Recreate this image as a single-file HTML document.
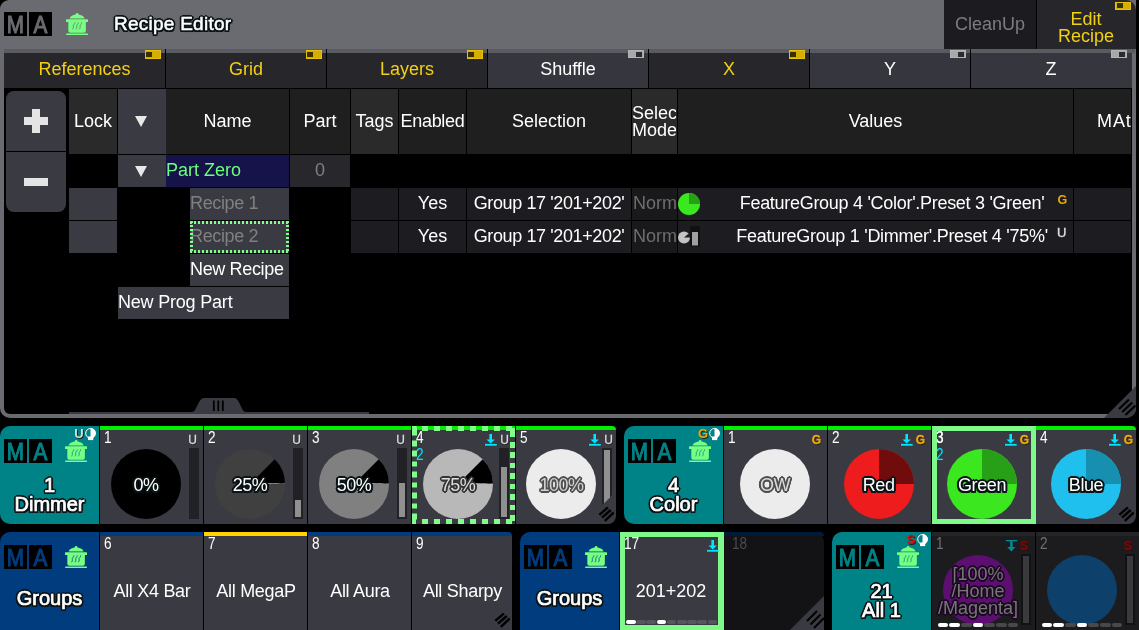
<!DOCTYPE html>
<html>
<head>
<meta charset="utf-8">
<title>Recipe Editor</title>
<style>
html,body{margin:0;padding:0;background:#000;}
body{will-change:transform;width:1139px;height:630px;position:relative;overflow:hidden;font-family:"Liberation Sans",sans-serif;color:#fff;font-size:18px;}
.a{position:absolute;box-sizing:border-box;}
.t{position:absolute;white-space:nowrap;text-align:center;line-height:20px;}
.y{color:#f2d014;}
.hd{background:#1f1f1f;}
.hl{background:#2a2a2a;}
.ol{text-shadow:-1.5px 0px 0.5px #0b1416,1.5px 0px 0.5px #0b1416,0px -1.5px 0.5px #0b1416,0px 1.5px 0.5px #0b1416,-1.1px -1.1px 0.5px #0b1416,1.1px -1.1px 0.5px #0b1416,-1.1px 1.1px 0.5px #0b1416,1.1px 1.1px 0.5px #0b1416,-2px 0px 0.5px #0b1416,2px 0px 0.5px #0b1416,0px 2px 0.5px #0b1416,0px -2px 0.5px #0b1416,1.5px 1.5px 0.5px #0b1416,-1.5px 1.5px 0.5px #0b1416,1.5px -1.5px 0.5px #0b1416,-1.5px -1.5px 0.5px #0b1416,0 0 3px #000;}
.lg{font-size:23px;-webkit-text-stroke:1px currentColor;transform:scaleX(.9);margin-top:0.5px;}
.tt{font-size:20px;-webkit-text-stroke:0.7px #fff;}
.nm{font-size:16px;line-height:16px;transform:scaleX(.85);transform-origin:0 0;}
.fl{font-size:12px;line-height:13px;-webkit-text-stroke:0.3px currentColor;text-shadow:0.7px 0.7px 0 #1a1a1a;}
.fl2{font-size:13px;line-height:13px;font-weight:bold;text-shadow:1px 1px 0 #222;}
.ol2{text-shadow:-1.5px 0px 0.5px #505050,1.5px 0px 0.5px #505050,0px -1.5px 0.5px #505050,0px 1.5px 0.5px #505050,-1.1px -1.1px 0.5px #505050,1.1px -1.1px 0.5px #505050,-1.1px 1.1px 0.5px #505050,1.1px 1.1px 0.5px #505050,-1.8px 0px 0.5px #505050,1.8px 0px 0.5px #505050,0px 1.8px 0.5px #505050,0px -1.8px 0.5px #505050,1.3px 1.3px 0.5px #505050,-1.3px 1.3px 0.5px #505050,1.3px -1.3px 0.5px #505050,-1.3px -1.3px 0.5px #505050;}
.ol3{text-shadow:-1.5px 0px 0.5px #1c0a22,1.5px 0px 0.5px #1c0a22,0px -1.5px 0.5px #1c0a22,0px 1.5px 0.5px #1c0a22,-1.1px -1.1px 0.5px #1c0a22,1.1px -1.1px 0.5px #1c0a22,-1.1px 1.1px 0.5px #1c0a22,1.1px 1.1px 0.5px #1c0a22,-1.8px 0px 0.5px #1c0a22,1.8px 0px 0.5px #1c0a22,0px 1.8px 0.5px #1c0a22,0px -1.8px 0.5px #1c0a22,1.3px 1.3px 0.5px #1c0a22,-1.3px 1.3px 0.5px #1c0a22,1.3px -1.3px 0.5px #1c0a22,-1.3px -1.3px 0.5px #1c0a22;}
.ol4{text-shadow:-1.5px 0px 0.5px #353535,1.5px 0px 0.5px #353535,0px -1.5px 0.5px #353535,0px 1.5px 0.5px #353535,-1.1px -1.1px 0.5px #353535,1.1px -1.1px 0.5px #353535,-1.1px 1.1px 0.5px #353535,1.1px 1.1px 0.5px #353535,-1.8px 0px 0.5px #353535,1.8px 0px 0.5px #353535,0px 1.8px 0.5px #353535,0px -1.8px 0.5px #353535,1.3px 1.3px 0.5px #353535,-1.3px 1.3px 0.5px #353535,1.3px -1.3px 0.5px #353535,-1.3px -1.3px 0.5px #353535;}
</style>
</head>
<body>
<!-- ===== Recipe Editor window ===== -->
<div class="a" id="win" style="left:0;top:0;width:1136px;height:418px;background:#6a6b70;border-radius:9px 0 10px 10px;"></div>
<div class="a" id="winbody" style="left:4px;top:53px;width:1128px;height:361px;background:#000;border-radius:0 0 0 6px;"></div>

<!-- title bar -->
<div class="a" style="left:4px;top:12px;width:23px;height:24px;background:#000;"></div>
<div class="a" style="left:29px;top:12px;width:23px;height:24px;background:#000;"></div>
<div class="t lg" style="left:4px;top:14px;width:23px;color:#6a6b70;">M</div>
<div class="t lg" style="left:29px;top:14px;width:23px;color:#6a6b70;">A</div>
<svg class="a" style="left:65.5px;top:13px;" width="22.400" height="22.700" viewBox="0 0 23 23" preserveAspectRatio="none"><use href="#pot" fill="#76ff82"/><use href="#steam" stroke="#6a6b70"/></svg>
<div class="t ol" style="left:114px;top:14px;font-size:19px;text-align:left;letter-spacing:0.25px;-webkit-text-stroke:0.5px #fff;">Recipe Editor</div>

<div class="a" style="left:944px;top:0;width:92px;height:49px;background:#1c1c20;"></div>
<div class="t" style="left:944px;top:14px;width:92px;color:#7c7c80;">CleanUp</div>
<div class="a" style="left:1036px;top:0;width:1px;height:49px;background:#000;"></div><div class="a" style="left:1037px;top:0;width:99px;height:49px;background:#26262b;border-radius:0 10px 0 0;"></div><div class="a" style="left:1115px;top:2px;width:16px;height:8px;background:#d4ae00;border:1px solid #e6c010;"></div><div class="a" style="left:1117px;top:3px;width:6px;height:5px;background:#3a3000;"></div>
<div class="t y" style="left:1037px;top:11px;width:98px;line-height:17px;">Edit<br>Recipe</div>

<!-- tabs -->
<div class="a" style="left:4px;top:49px;width:1131px;height:4px;background:#5a5b60;"></div>
<div class="a" style="left:4px;top:53px;width:161px;height:35px;background:#26262b;"></div>
<div class="t y" style="left:4px;top:59px;width:161px;">References</div>
<div class="a" style="left:145px;top:50.400px;width:16px;height:8.300px;background:#d4ae00;border:1px solid #e6c010;"></div><div class="a" style="left:146px;top:52px;width:6px;height:5px;background:#3a3000;"></div>
<div class="a" style="left:166px;top:53px;width:160px;height:35px;background:#26262b;"></div>
<div class="t y" style="left:166px;top:59px;width:160px;">Grid</div>
<div class="a" style="left:306px;top:50.400px;width:16px;height:8.300px;background:#d4ae00;border:1px solid #e6c010;"></div><div class="a" style="left:307px;top:52px;width:6px;height:5px;background:#3a3000;"></div>
<div class="a" style="left:327px;top:53px;width:160px;height:35px;background:#26262b;"></div>
<div class="t y" style="left:327px;top:59px;width:160px;">Layers</div>
<div class="a" style="left:467px;top:50.400px;width:16px;height:8.300px;background:#d4ae00;border:1px solid #e6c010;"></div><div class="a" style="left:468px;top:52px;width:6px;height:5px;background:#3a3000;"></div>
<div class="a" style="left:488px;top:53px;width:160px;height:35px;background:#36363e;"></div>
<div class="t " style="left:488px;top:59px;width:160px;">Shuffle</div>
<div class="a" style="left:628px;top:50.400px;width:16px;height:8px;background:#a8a8a8;border:1px solid #b4b4b4;"></div><div class="a" style="left:636px;top:52px;width:6px;height:5px;background:#2a2a30;"></div>
<div class="a" style="left:649px;top:53px;width:160px;height:35px;background:#26262b;"></div>
<div class="t y" style="left:649px;top:59px;width:160px;">X</div>
<div class="a" style="left:789px;top:50.400px;width:16px;height:8.300px;background:#d4ae00;border:1px solid #e6c010;"></div><div class="a" style="left:790px;top:52px;width:6px;height:5px;background:#3a3000;"></div>
<div class="a" style="left:810px;top:53px;width:160px;height:35px;background:#36363e;"></div>
<div class="t " style="left:810px;top:59px;width:160px;">Y</div>
<div class="a" style="left:950px;top:50.400px;width:16px;height:8px;background:#a8a8a8;border:1px solid #b4b4b4;"></div><div class="a" style="left:958px;top:52px;width:6px;height:5px;background:#2a2a30;"></div>
<div class="a" style="left:971px;top:53px;width:161px;height:35px;background:#36363e;"></div>
<div class="t " style="left:971px;top:59px;width:160px;">Z</div>
<div class="a" style="left:1111px;top:50.400px;width:16px;height:8px;background:#a8a8a8;border:1px solid #b4b4b4;"></div><div class="a" style="left:1119px;top:52px;width:6px;height:5px;background:#2a2a30;"></div>

<div class="a" style="left:165px;top:49px;width:1px;height:39px;background:#000;"></div>
<div class="a" style="left:326px;top:49px;width:1px;height:39px;background:#000;"></div>
<div class="a" style="left:487px;top:49px;width:1px;height:39px;background:#000;"></div>
<div class="a" style="left:648px;top:49px;width:1px;height:39px;background:#000;"></div>
<div class="a" style="left:809px;top:49px;width:1px;height:39px;background:#000;"></div>
<div class="a" style="left:970px;top:49px;width:1px;height:39px;background:#000;"></div>
<div class="a" style="left:6px;top:91px;width:60px;height:60px;background:#3a3a42;border-radius:8px 8px 0 0;"></div>
<div class="a" style="left:6px;top:152px;width:60px;height:60px;background:#3a3a42;border-radius:0 0 8px 8px;"></div>
<div class="a" style="left:24px;top:117px;width:24px;height:8px;background:#e4e4e4;"></div><div class="a" style="left:32px;top:109px;width:8px;height:24px;background:#e4e4e4;"></div>
<div class="a" style="left:24px;top:178px;width:24px;height:8px;background:#e4e4e4;"></div>
<div class="a" style="left:69px;top:89px;width:48px;height:65px;background:#2a2a2a;"></div>
<div class="t" style="left:69px;top:111px;width:48px;">Lock</div>
<div class="a" style="left:118px;top:89px;width:48px;height:65px;background:#3a3a42;"></div>
<div class="a" style="left:166px;top:89px;width:123px;height:65px;background:#1f1f1f;"></div>
<div class="t" style="left:166px;top:111px;width:123px;">Name</div>
<div class="a" style="left:290px;top:89px;width:60px;height:65px;background:#1f1f1f;"></div>
<div class="t" style="left:290px;top:111px;width:60px;">Part</div>
<div class="a" style="left:351px;top:89px;width:47px;height:65px;background:#2a2a2a;"></div>
<div class="t" style="left:351px;top:111px;width:47px;">Tags</div>
<div class="a" style="left:399px;top:89px;width:67px;height:65px;background:#1f1f1f;"></div>
<div class="t" style="left:399px;top:111px;width:67px;letter-spacing:-0.3px;">Enabled</div>
<div class="a" style="left:467px;top:89px;width:164px;height:65px;background:#1f1f1f;"></div>
<div class="t" style="left:467px;top:111px;width:164px;">Selection</div>
<div class="a" style="left:632px;top:89px;width:45px;height:65px;background:#2a2a2a;"></div>
<div class="a" style="left:678px;top:89px;width:395px;height:65px;background:#1f1f1f;"></div>
<div class="t" style="left:678px;top:111px;width:395px;">Values</div>
<div class="a" style="left:1074px;top:89px;width:57px;height:65px;background:#1f1f1f;"></div>
<div class="t" style="left:632px;top:105px;line-height:17px;text-align:left;width:44px;overflow:hidden;">Select<br>Mode</div>
<div class="t" style="left:1097px;top:111px;text-align:left;width:35px;overflow:hidden;letter-spacing:0.9px;">MAtricks</div>
<div class="a" style="left:135px;top:116px;width:0;height:0;border-left:6px solid transparent;border-right:6px solid transparent;border-top:11px solid #e8e8e8;"></div>
<div class="a" style="left:118px;top:155px;width:48px;height:32px;background:#3a3a42;"></div>
<div class="a" style="left:135px;top:166px;width:0;height:0;border-left:6px solid transparent;border-right:6px solid transparent;border-top:11px solid #e8e8e8;"></div>
<div class="a" style="left:166px;top:155px;width:123px;height:32px;background:#15134a;"></div>
<div class="t" style="left:166px;top:160px;width:123px;color:#6bff7b;text-align:left;">Part Zero</div>
<div class="a" style="left:290px;top:155px;width:60px;height:32px;background:#28282c;"></div>
<div class="t" style="left:290px;top:160px;width:60px;color:#808080;text-align:center;">0</div>
<div class="a" style="left:69px;top:188px;width:48px;height:32px;background:#3a3a42;"></div>
<div class="a" style="left:190px;top:188px;width:99px;height:32px;background:#3a3a42;"></div>
<div class="t" style="left:190px;top:193px;width:98px;color:#808080;text-align:left;letter-spacing:-0.35px;">Recipe 1</div>
<div class="a" style="left:351px;top:188px;width:47px;height:32px;background:#1d1d21;"></div>
<div class="a" style="left:399px;top:188px;width:67px;height:32px;background:#1d1d21;"></div>
<div class="t" style="left:399px;top:193px;width:67px;color:#fff;text-align:center;">Yes</div>
<div class="a" style="left:467px;top:188px;width:164px;height:32px;background:#1d1d21;"></div>
<div class="t" style="left:467px;top:193px;width:164px;color:#fff;text-align:center;letter-spacing:-0.38px;">Group 17 '201+202'</div>
<div class="a" style="left:632px;top:188px;width:45px;height:32px;background:#19191c;"></div>
<div class="t" style="left:633px;top:193px;width:44px;color:#6e6e6e;text-align:left;overflow:hidden;">Normal</div>
<div class="a" style="left:678px;top:188px;width:395px;height:32px;background:#1d1d21;"></div>
<div class="t" style="left:702px;top:193px;width:380px;color:#fff;text-align:center;letter-spacing:-0.29px;">FeatureGroup 4 'Color'.Preset 3 'Green'</div>
<div class="a" style="left:1074px;top:188px;width:57px;height:32px;background:#1d1d21;"></div>
<div class="a" style="left:69px;top:221px;width:48px;height:32px;background:#3a3a42;"></div>
<div class="a" style="left:190px;top:221px;width:99px;height:32px;background:#3a3a42;"></div>
<div class="t" style="left:190px;top:226px;width:98px;color:#808080;text-align:left;letter-spacing:-0.35px;">Recipe 2</div>
<div class="a" style="left:351px;top:221px;width:47px;height:32px;background:#1d1d21;"></div>
<div class="a" style="left:399px;top:221px;width:67px;height:32px;background:#1d1d21;"></div>
<div class="t" style="left:399px;top:226px;width:67px;color:#fff;text-align:center;">Yes</div>
<div class="a" style="left:467px;top:221px;width:164px;height:32px;background:#1d1d21;"></div>
<div class="t" style="left:467px;top:226px;width:164px;color:#fff;text-align:center;letter-spacing:-0.38px;">Group 17 '201+202'</div>
<div class="a" style="left:632px;top:221px;width:45px;height:32px;background:#19191c;"></div>
<div class="t" style="left:633px;top:226px;width:44px;color:#6e6e6e;text-align:left;overflow:hidden;">Normal</div>
<div class="a" style="left:678px;top:221px;width:395px;height:32px;background:#1d1d21;"></div>
<div class="t" style="left:702px;top:226px;width:380px;color:#fff;text-align:center;letter-spacing:-0.27px;">FeatureGroup 1 'Dimmer'.Preset 4 '75%'</div>
<div class="a" style="left:1074px;top:221px;width:57px;height:32px;background:#1d1d21;"></div>
<div class="t" style="left:1057.500px;top:193.500px;font-size:12.5px;font-weight:bold;color:#f0a800;line-height:12px;">G</div>
<div class="t" style="left:1057px;top:226.500px;font-size:13px;color:#ddd;line-height:12px;-webkit-text-stroke:0.4px #ddd;">U</div>
<div class="a" style="left:190px;top:221px;width:99px;height:3px;background:repeating-linear-gradient(90deg,#80ff8a 0 2px,transparent 2px 4px);"></div><div class="a" style="left:190px;top:250px;width:99px;height:3px;background:repeating-linear-gradient(90deg,#80ff8a 0 2px,transparent 2px 4px);"></div><div class="a" style="left:190px;top:221px;width:3px;height:32px;background:repeating-linear-gradient(180deg,#80ff8a 0 2px,transparent 2px 4px);"></div><div class="a" style="left:286px;top:221px;width:3px;height:32px;background:repeating-linear-gradient(180deg,#80ff8a 0 2px,transparent 2px 4px);"></div>
<svg class="a" style="left:678px;top:193px;" width="22" height="22" viewBox="0 0 22 22"><circle cx="11" cy="11" r="11" fill="#3be81f"/><path d="M11 11V0A11 11 0 0 1 22 11z" fill="#27a017"/></svg>
<svg class="a" style="left:678px;top:226px;" width="22" height="21" viewBox="0 0 22 21"><circle cx="6" cy="11.500" r="6" fill="#c4c4c4"/><path d="M6 11.500L13 5.500V11.500z" fill="#1d1d21"/><rect x="12" y="0" width="10" height="20.500" fill="#111"/><rect x="14" y="6" width="6" height="13.500" fill="#a0a0a0"/></svg>
<div class="a" style="left:190px;top:254px;width:99px;height:32px;background:#3a3a42;"></div>
<div class="t" style="left:190px;top:259px;width:98px;color:#fff;text-align:left;letter-spacing:-0.35px;">New Recipe</div>
<div class="a" style="left:118px;top:287px;width:171px;height:32px;background:#3a3a42;"></div>
<div class="t" style="left:118px;top:292px;width:171px;color:#fff;text-align:left;letter-spacing:-0.2px;">New Prog Part</div>
<div class="a" style="left:69px;top:412px;width:300px;height:2px;background:#3a3a42;"></div>
<svg class="a" style="left:192px;top:398px;" width="54" height="14" viewBox="0 0 54 14"><path d="M0 14C5 14 6 0 12 0H42C48 0 49 14 54 14z" fill="#3a3a42"/><path d="M21.800 2.500V13M26.300 2.500V13M30.800 2.500V13" stroke="#000" stroke-width="1.800"/></svg>
<svg class="a" style="left:1104px;top:386px;" width="32" height="32" viewBox="0 0 32 32"><path d="M32 0V22A10 10 0 0 1 22 32H0z" fill="#3a3a42"/><path d="M15 23L25 13.500M18.200 26L28.200 16.500M21.400 29L31.400 19.500" stroke="#000" stroke-width="2.200"/></svg>
<!-- pools -->
<div class="a" style="left:0px;top:426px;width:99px;height:98px;background:#008387;border-radius:10px 0 0 10px;"></div>
<div class="a" style="left:4px;top:439px;width:23px;height:24px;background:#000;"></div>
<div class="a" style="left:29px;top:439px;width:23px;height:24px;background:#000;"></div>
<div class="t lg" style="left:4px;top:441px;width:23px;color:#008387;">M</div><div class="t lg" style="left:29px;top:441px;width:23px;color:#008387;">A</div>
<svg class="a" style="left:64.5px;top:439.5px;" width="22.400" height="22.700" viewBox="0 0 23 23" preserveAspectRatio="none"><use href="#pot" fill="#76ff82"/><use href="#steam" stroke="#008387"/></svg>
<div class="t fl2" style="left:73px;top:427px;width:12px;color:#e0d8d8;">U</div>
<svg class="a" style="left:85px;top:428px;" width="12" height="13" viewBox="0 0 12 13"><use href="#bulb"/></svg>
<div class="t tt ol" style="left:0px;top:475px;width:99px;">1</div>
<div class="t tt ol" style="left:0px;top:494px;width:99px;">Dimmer</div>
<div class="a" style="left:100px;top:426px;width:516px;height:4px;background:#00f000;border-radius:0 8px 0 0;"></div>
<div class="a" style="left:100px;top:430px;width:103px;height:94px;background:#3a3a42;"></div>
<div class="t nm" style="left:103.5px;top:430px;text-align:left;color:#fff;">1</div>
<div class="t fl" style="left:186.5px;top:434px;width:12px;color:#ddd;">U</div>
<svg class="a" style="left:109.5px;top:447.5px;" width="72" height="72" viewBox="-36 -36 72 72"><circle r="35" fill="#000"/></svg>
<div class="a" style="left:189px;top:448px;width:10px;height:71px;background:#222226;"></div>
<div class="t ol" style="left:96px;top:475px;width:100px;color:#fff;letter-spacing:-0.5px;">0%</div>
<div class="a" style="left:204px;top:430px;width:103px;height:94px;background:#3a3a42;"></div>
<div class="t nm" style="left:207.5px;top:430px;text-align:left;color:#fff;">2</div>
<div class="t fl" style="left:290.5px;top:434px;width:12px;color:#ddd;">U</div>
<svg class="a" style="left:213.5px;top:447.5px;" width="72" height="72" viewBox="-36 -36 72 72"><circle r="35" fill="#404040"/><path d="M0 0L35.00 -0.00A35 35 0 0 0 24.75 -24.75z" fill="#000"/></svg>
<div class="a" style="left:263.5px;top:483px;width:21px;height:1px;background:linear-gradient(90deg,#c33,#cc3,#3c3,#3cc,#33c,#c3c);opacity:.85;"></div>
<div class="a" style="left:293px;top:448px;width:10px;height:71px;background:#222226;"></div>
<div class="a" style="left:295px;top:500px;width:6px;height:17px;background:#909090;"></div>
<div class="t ol" style="left:200px;top:475px;width:100px;color:#fff;letter-spacing:-0.5px;">25%</div>
<div class="a" style="left:308px;top:430px;width:103px;height:94px;background:#3a3a42;"></div>
<div class="t nm" style="left:311.5px;top:430px;text-align:left;color:#fff;">3</div>
<div class="t fl" style="left:394.5px;top:434px;width:12px;color:#ddd;">U</div>
<svg class="a" style="left:317.5px;top:447.5px;" width="72" height="72" viewBox="-36 -36 72 72"><circle r="35" fill="#808080"/><path d="M0 0L35.00 -0.00A35 35 0 0 0 24.75 -24.75z" fill="#000"/></svg>
<div class="a" style="left:367.5px;top:483px;width:21px;height:1px;background:linear-gradient(90deg,#c33,#cc3,#3c3,#3cc,#33c,#c3c);opacity:.85;"></div>
<div class="a" style="left:397px;top:448px;width:10px;height:71px;background:#222226;"></div>
<div class="a" style="left:399px;top:483px;width:6px;height:34px;background:#909090;"></div>
<div class="t ol" style="left:304px;top:475px;width:100px;color:#fff;letter-spacing:-0.5px;">50%</div>
<div class="a" style="left:412px;top:430px;width:103px;height:94px;background:#3a3a42;"></div>
<div class="t nm" style="left:415.5px;top:430px;text-align:left;color:#fff;">4</div>
<div class="t fl" style="left:498.5px;top:434px;width:12px;color:#ddd;">U</div>
<svg class="a" style="left:485.4px;top:433.9px;" width="12" height="12" viewBox="0 0 12 12"><use href="#dl" fill="#00e5ff"/></svg>
<svg class="a" style="left:421.5px;top:447.5px;" width="72" height="72" viewBox="-36 -36 72 72"><circle r="35" fill="#b8b8b8"/><path d="M0 0L35.00 -0.00A35 35 0 0 0 24.75 -24.75z" fill="#000"/></svg>
<div class="a" style="left:471.5px;top:483px;width:21px;height:1px;background:linear-gradient(90deg,#c33,#cc3,#3c3,#3cc,#33c,#c3c);opacity:.85;"></div>
<div class="a" style="left:499px;top:448px;width:10px;height:71px;background:#222226;"></div>
<div class="a" style="left:501px;top:467px;width:6px;height:50px;background:#909090;"></div>
<div class="t ol4" style="left:408px;top:475px;width:100px;color:#dedede;letter-spacing:-0.5px;">75%</div>
<div class="a" style="left:516px;top:430px;width:100px;height:94px;background:#3a3a42;border-radius:0 0 8px 0;"></div>
<div class="t nm" style="left:519.5px;top:430px;text-align:left;color:#fff;">5</div>
<div class="t fl" style="left:602.5px;top:434px;width:12px;color:#ddd;">U</div>
<svg class="a" style="left:589.4px;top:433.9px;" width="12" height="12" viewBox="0 0 12 12"><use href="#dl" fill="#00e5ff"/></svg>
<svg class="a" style="left:525px;top:447.5px;" width="72" height="72" viewBox="-36 -36 72 72"><circle r="35" fill="#ececec"/></svg>
<div class="a" style="left:602px;top:448px;width:10px;height:57px;background:#222226;clip-path:polygon(0 0,100% 0,100% 47px,0 57px);"></div>
<div class="a" style="left:604px;top:450px;width:6px;height:53.5px;background:#909090;clip-path:polygon(0 0,100% 0,100% 47.5px,0 53.5px);"></div>
<div class="t ol2" style="left:511.5px;top:475px;width:100px;color:#d2d2d2;letter-spacing:-0.5px;">100%</div>
<div class="a" style="left:203px;top:426px;width:1px;height:98px;background:#000;"></div>
<div class="a" style="left:307px;top:426px;width:1px;height:98px;background:#000;"></div>
<div class="a" style="left:411px;top:426px;width:1px;height:98px;background:#000;"></div>
<div class="a" style="left:515px;top:426px;width:1px;height:98px;background:#000;"></div>
<div class="a" style="left:827px;top:426px;width:1px;height:98px;background:#000;"></div>
<div class="a" style="left:931px;top:426px;width:1px;height:98px;background:#000;"></div>
<div class="a" style="left:1035px;top:426px;width:1px;height:98px;background:#000;"></div>
<div class="t nm" style="left:415.5px;top:447px;text-align:left;color:#00e5ff;">2</div>
<div class="a" style="left:412px;top:426px;width:104px;height:5px;background:repeating-linear-gradient(90deg,#80ff8a 0 4px,transparent 4px 10px,#80ff8a 10px 12px);"></div><div class="a" style="left:412px;top:519px;width:104px;height:5px;background:repeating-linear-gradient(90deg,#80ff8a 0 4px,transparent 4px 10px,#80ff8a 10px 12px);"></div><div class="a" style="left:412px;top:426px;width:5px;height:98px;background:repeating-linear-gradient(180deg,#80ff8a 0 5px,transparent 5px 10px,#80ff8a 10px 10.5px) 0 4.5px;"></div><div class="a" style="left:510px;top:426px;width:5px;height:98px;background:repeating-linear-gradient(180deg,#80ff8a 0 5px,transparent 5px 10px,#80ff8a 10px 10.5px) 0 6px;"></div>
<svg class="a" style="left:598px;top:507px;" width="16" height="16" viewBox="0 0 16 16"><use href="#grip"/></svg>
<div class="a" style="left:624px;top:426px;width:99px;height:98px;background:#008387;border-radius:10px 0 0 10px;"></div>
<div class="a" style="left:628px;top:439px;width:23px;height:24px;background:#000;"></div>
<div class="a" style="left:653px;top:439px;width:23px;height:24px;background:#000;"></div>
<div class="t lg" style="left:628px;top:441px;width:23px;color:#008387;">M</div><div class="t lg" style="left:653px;top:441px;width:23px;color:#008387;">A</div>
<svg class="a" style="left:688.5px;top:439.5px;" width="22.400" height="22.700" viewBox="0 0 23 23" preserveAspectRatio="none"><use href="#pot" fill="#76ff82"/><use href="#steam" stroke="#008387"/></svg>
<div class="t fl2" style="left:697px;top:427px;width:12px;color:#f2aa00;">G</div>
<svg class="a" style="left:709px;top:428px;" width="12" height="13" viewBox="0 0 12 13"><use href="#bulb"/></svg>
<div class="t tt ol" style="left:624px;top:475px;width:99px;">4</div>
<div class="t tt ol" style="left:624px;top:494px;width:99px;">Color</div>
<div class="a" style="left:724px;top:426px;width:412px;height:4px;background:#00f000;border-radius:0 8px 0 0;"></div>
<div class="a" style="left:724px;top:430px;width:103px;height:94px;background:#3a3a42;"></div>
<div class="t nm" style="left:727.5px;top:430px;text-align:left;color:#fff;">1</div>
<div class="t fl" style="left:810.5px;top:434px;width:12px;color:#f2aa00;font-weight:bold;">G</div>
<svg class="a" style="left:739px;top:447.5px;" width="72" height="72" viewBox="-36 -36 72 72"><circle r="35" fill="#ececec"/></svg>
<div class="t ol2" style="left:725px;top:475px;width:100px;color:#d8d8d8;letter-spacing:-0.4px;">OW</div>
<div class="a" style="left:828px;top:430px;width:103px;height:94px;background:#3a3a42;"></div>
<div class="t nm" style="left:831.5px;top:430px;text-align:left;color:#fff;">2</div>
<div class="t fl" style="left:914.5px;top:434px;width:12px;color:#f2aa00;font-weight:bold;">G</div>
<svg class="a" style="left:901.4px;top:433.9px;" width="12" height="12" viewBox="0 0 12 12"><use href="#dl" fill="#00e5ff"/></svg>
<svg class="a" style="left:842.7px;top:447.5px;" width="72" height="72" viewBox="-36 -36 72 72"><circle r="35" fill="#ee1c1c"/><path d="M0 0L35.00 -0.00A35 35 0 0 0 0.00 -35.00z" fill="#700c0c"/></svg>
<div class="t ol" style="left:828.7px;top:475px;width:100px;color:#fff;letter-spacing:-0.4px;">Red</div>
<div class="a" style="left:932px;top:430px;width:103px;height:94px;background:#3a3a42;"></div>
<div class="t nm" style="left:935.5px;top:430px;text-align:left;color:#fff;">3</div>
<div class="t fl" style="left:1018.5px;top:434px;width:12px;color:#f2aa00;font-weight:bold;">G</div>
<svg class="a" style="left:1005.4px;top:433.9px;" width="12" height="12" viewBox="0 0 12 12"><use href="#dl" fill="#00e5ff"/></svg>
<svg class="a" style="left:946px;top:447.5px;" width="72" height="72" viewBox="-36 -36 72 72"><circle r="35" fill="#3be81f"/><path d="M0 0L35.00 -0.00A35 35 0 0 0 0.00 -35.00z" fill="#27a017"/></svg>
<div class="t ol" style="left:932px;top:475px;width:100px;color:#fff;letter-spacing:-0.4px;">Green</div>
<div class="a" style="left:1036px;top:430px;width:100px;height:94px;background:#3a3a42;border-radius:0 0 8px 0;"></div>
<div class="t nm" style="left:1039.5px;top:430px;text-align:left;color:#fff;">4</div>
<div class="t fl" style="left:1122.5px;top:434px;width:12px;color:#f2aa00;font-weight:bold;">G</div>
<svg class="a" style="left:1109.4px;top:433.9px;" width="12" height="12" viewBox="0 0 12 12"><use href="#dl" fill="#00e5ff"/></svg>
<svg class="a" style="left:1050px;top:447.5px;" width="72" height="72" viewBox="-36 -36 72 72"><circle r="35" fill="#1fc0ee"/><path d="M0 0L35.00 -0.00A35 35 0 0 0 0.00 -35.00z" fill="#168fb0"/></svg>
<div class="t ol" style="left:1036px;top:475px;width:100px;color:#fff;letter-spacing:-0.4px;">Blue</div>
<div class="a" style="left:827px;top:426px;width:1px;height:98px;background:#000;"></div>
<div class="a" style="left:931px;top:426px;width:1px;height:98px;background:#000;"></div>
<div class="a" style="left:1035px;top:426px;width:1px;height:98px;background:#000;"></div>
<div class="a" style="left:932px;top:426px;width:104px;height:98px;border:5px solid #80f98b;"></div>
<div class="t nm" style="left:935.5px;top:430px;text-align:left;color:#fff;">3</div>
<div class="t nm" style="left:935.5px;top:447px;text-align:left;color:#00e5ff;">2</div>
<svg class="a" style="left:1118px;top:507px;" width="16" height="16" viewBox="0 0 16 16"><use href="#grip"/></svg>
<div class="a" style="left:0px;top:532px;width:99px;height:98px;background:#003c7e;border-radius:10px 0 0 0;"></div>
<div class="a" style="left:4px;top:545px;width:23px;height:24px;background:#000;"></div>
<div class="a" style="left:29px;top:545px;width:23px;height:24px;background:#000;"></div>
<div class="t lg" style="left:4px;top:547px;width:23px;color:#003c7e;">M</div><div class="t lg" style="left:29px;top:547px;width:23px;color:#003c7e;">A</div>
<svg class="a" style="left:64.5px;top:545.5px;" width="22.400" height="22.700" viewBox="0 0 23 23" preserveAspectRatio="none"><use href="#pot" fill="#76ff82"/><use href="#steam" stroke="#003c7e"/></svg>
<div class="t tt ol" style="left:0px;top:588px;width:99px;">Groups</div>
<div class="a" style="left:100px;top:532px;width:103px;height:4px;background:#003c7e;"></div>
<div class="a" style="left:100px;top:536px;width:103px;height:94px;background:#3a3a42;"></div>
<div class="t nm" style="left:103.5px;top:536px;text-align:left;color:#fff;">6</div>
<div class="t" style="left:100px;top:581px;width:104px;letter-spacing:-0.3px;">All X4 Bar</div>
<div class="a" style="left:204px;top:532px;width:103px;height:4px;background:#ffd200;"></div>
<div class="a" style="left:204px;top:536px;width:103px;height:94px;background:#3a3a42;"></div>
<div class="t nm" style="left:207.5px;top:536px;text-align:left;color:#fff;">7</div>
<div class="t" style="left:204px;top:581px;width:104px;letter-spacing:-0.3px;">All MegaP</div>
<div class="a" style="left:308px;top:532px;width:103px;height:4px;background:#003c7e;"></div>
<div class="a" style="left:308px;top:536px;width:103px;height:94px;background:#3a3a42;"></div>
<div class="t nm" style="left:311.5px;top:536px;text-align:left;color:#fff;">8</div>
<div class="t" style="left:308px;top:581px;width:104px;letter-spacing:-0.3px;">All Aura</div>
<div class="a" style="left:412px;top:532px;width:100px;height:4px;background:#003c7e;border-radius:0 8px 0 0;"></div>
<div class="a" style="left:412px;top:536px;width:100px;height:94px;background:#3a3a42;"></div>
<div class="t nm" style="left:415.5px;top:536px;text-align:left;color:#fff;">9</div>
<div class="t" style="left:412px;top:581px;width:101px;letter-spacing:-0.3px;">All Sharpy</div>
<svg class="a" style="left:494px;top:613px;" width="16" height="16" viewBox="0 0 16 16"><use href="#grip"/></svg>
<div class="a" style="left:520px;top:532px;width:99px;height:98px;background:#003c7e;border-radius:10px 0 0 0;"></div>
<div class="a" style="left:524px;top:545px;width:23px;height:24px;background:#000;"></div>
<div class="a" style="left:549px;top:545px;width:23px;height:24px;background:#000;"></div>
<div class="t lg" style="left:524px;top:547px;width:23px;color:#003c7e;">M</div><div class="t lg" style="left:549px;top:547px;width:23px;color:#003c7e;">A</div>
<svg class="a" style="left:584.5px;top:545.5px;" width="22.400" height="22.700" viewBox="0 0 23 23" preserveAspectRatio="none"><use href="#pot" fill="#76ff82"/><use href="#steam" stroke="#003c7e"/></svg>
<div class="t tt ol" style="left:520px;top:588px;width:99px;">Groups</div>
<div class="a" style="left:620px;top:532px;width:104px;height:98px;background:#80f98b;"></div>
<div class="a" style="left:625px;top:537px;width:93px;height:88px;background:#3a3a42;"></div>
<div class="t nm" style="left:623.5px;top:536px;text-align:left;color:#fff;">17</div>
<svg class="a" style="left:707.4px;top:539.9px;" width="12" height="12" viewBox="0 0 12 12"><use href="#dl" fill="#00e5ff"/></svg>
<div class="t" style="left:619px;top:581px;width:104px;">201+202</div>
<div class="a" style="left:626px;top:620px;width:9.5px;height:4px;background:#fff;border-radius:2px;"></div>
<div class="a" style="left:636.2px;top:620px;width:9.5px;height:4px;background:#56565c;border-radius:2px;"></div>
<div class="a" style="left:646.4px;top:620px;width:9.5px;height:4px;background:#56565c;border-radius:2px;"></div>
<div class="a" style="left:656.6px;top:620px;width:9.5px;height:4px;background:#fff;border-radius:2px;"></div>
<div class="a" style="left:666.8px;top:620px;width:9.5px;height:4px;background:#56565c;border-radius:2px;"></div>
<div class="a" style="left:677px;top:620px;width:9.5px;height:4px;background:#56565c;border-radius:2px;"></div>
<div class="a" style="left:687.2px;top:620px;width:9.5px;height:4px;background:#56565c;border-radius:2px;"></div>
<div class="a" style="left:697.4px;top:620px;width:9.5px;height:4px;background:#56565c;border-radius:2px;"></div>
<div class="a" style="left:707.6px;top:620px;width:9.5px;height:4px;background:#56565c;border-radius:2px;"></div>
<div class="a" style="left:724px;top:532px;width:100px;height:98px;background:#131316;border-radius:0 10px 0 0;"></div>
<div class="a" style="left:724px;top:532px;width:100px;height:4px;background:#001a3a;border-radius:0 10px 0 0;"></div>
<div class="t nm" style="left:731.5px;top:536px;text-align:left;color:#4a4a4e;">18</div>
<svg class="a" style="left:790px;top:596px;" width="34" height="34" viewBox="0 0 34 34"><path d="M34 0V34H0z" fill="#3a3a42"/><path d="M17 25L27 15M20.500 28.500L30.500 18.500M24 32L34 22" stroke="#000" stroke-width="2"/></svg>
<div class="a" style="left:832px;top:532px;width:99px;height:98px;background:#008387;border-radius:10px 0 0 0;"></div>
<div class="a" style="left:836px;top:545px;width:23px;height:24px;background:#000;"></div>
<div class="a" style="left:861px;top:545px;width:23px;height:24px;background:#000;"></div>
<div class="t lg" style="left:836px;top:547px;width:23px;color:#008387;">M</div><div class="t lg" style="left:861px;top:547px;width:23px;color:#008387;">A</div>
<svg class="a" style="left:896.5px;top:545.5px;" width="22.400" height="22.700" viewBox="0 0 23 23" preserveAspectRatio="none"><use href="#pot" fill="#76ff82"/><use href="#steam" stroke="#008387"/></svg>
<div class="t fl2" style="left:905px;top:533px;width:12px;color:#f00000;">S</div>
<svg class="a" style="left:917px;top:534px;" width="12" height="13" viewBox="0 0 12 13"><use href="#bulb"/></svg>
<div class="t tt ol" style="left:832px;top:581px;width:99px;">21</div>
<div class="t tt ol" style="left:832px;top:600px;width:99px;">All 1</div>
<div class="a" style="left:932px;top:532px;width:103px;height:4px;background:#252528;"></div>
<div class="a" style="left:932px;top:536px;width:103px;height:94px;background:#1c1c1f;"></div>
<div class="t nm" style="left:935.5px;top:536px;text-align:left;color:#707070;">1</div>
<div class="t fl" style="left:1018px;top:540px;width:12px;color:#8b0000;font-weight:bold;">S</div>
<svg class="a" style="left:941.8px;top:554px;" width="72" height="72" viewBox="-36 -36 72 72"><circle r="35" fill="#5c0f70"/></svg>
<div class="a" style="left:1021px;top:554px;width:10px;height:71px;background:#121215;"></div>
<div class="a" style="left:1023px;top:556px;width:6px;height:67px;background:#3a3a3e;"></div>
<div class="a" style="left:937.5px;top:623px;width:10.8px;height:3.7px;background:#fff;border-radius:2px;"></div>
<div class="a" style="left:949.2px;top:623px;width:10.8px;height:3.7px;background:#fff;border-radius:2px;"></div>
<div class="a" style="left:960.9px;top:623px;width:10.8px;height:3.7px;background:#48484c;border-radius:2px;"></div>
<div class="a" style="left:972.6px;top:623px;width:10.8px;height:3.7px;background:#fff;border-radius:2px;"></div>
<div class="a" style="left:984.3px;top:623px;width:10.8px;height:3.7px;background:#48484c;border-radius:2px;"></div>
<div class="a" style="left:996px;top:623px;width:10.8px;height:3.7px;background:#48484c;border-radius:2px;"></div>
<div class="a" style="left:1007.7px;top:623px;width:10.8px;height:3.7px;background:#48484c;border-radius:2px;"></div>
<div class="a" style="left:1036px;top:532px;width:103px;height:4px;background:#252528;"></div>
<div class="a" style="left:1036px;top:536px;width:103px;height:94px;background:#1c1c1f;"></div>
<div class="t nm" style="left:1039.5px;top:536px;text-align:left;color:#707070;">2</div>
<div class="t fl" style="left:1122px;top:540px;width:12px;color:#8b0000;font-weight:bold;">S</div>
<svg class="a" style="left:1045.8px;top:554px;" width="72" height="72" viewBox="-36 -36 72 72"><circle r="35" fill="#0d416b"/></svg>
<div class="a" style="left:1125px;top:554px;width:10px;height:71px;background:#121215;"></div>
<div class="a" style="left:1127px;top:556px;width:6px;height:67px;background:#3a3a3e;"></div>
<div class="a" style="left:1041.5px;top:623px;width:10.8px;height:3.7px;background:#fff;border-radius:2px;"></div>
<div class="a" style="left:1053.2px;top:623px;width:10.8px;height:3.7px;background:#fff;border-radius:2px;"></div>
<div class="a" style="left:1064.9px;top:623px;width:10.8px;height:3.7px;background:#48484c;border-radius:2px;"></div>
<div class="a" style="left:1076.6px;top:623px;width:10.8px;height:3.7px;background:#fff;border-radius:2px;"></div>
<div class="a" style="left:1088.3px;top:623px;width:10.8px;height:3.7px;background:#48484c;border-radius:2px;"></div>
<div class="a" style="left:1100px;top:623px;width:10.8px;height:3.7px;background:#48484c;border-radius:2px;"></div>
<div class="a" style="left:1111.7px;top:623px;width:10.8px;height:3.7px;background:#48484c;border-radius:2px;"></div>
<svg class="a" style="left:1005.6px;top:539.8px;" width="12" height="12" viewBox="0 0 12 12"><use href="#dl2" fill="#008c94"/></svg>
<div class="t ol3" style="left:926px;top:566px;width:104px;color:#777;line-height:17px;">[100%<br>/Home<br>/Magenta]</div>
<svg width="0" height="0" style="position:absolute">
<defs>
<g id="pot">
<circle cx="11.400" cy="1.400" r="1.400"/>
<path d="M3.800 5.500C4.300 3.300 7.500 1.600 11.400 1.600S18.500 3.300 19 5.500z"/>
<path d="M0.700 6.400H22.100A0.700 0.700 0 0 1 22.800 7.100V8.500A0.700 0.700 0 0 1 22.100 9.200H20.400V18A2 2 0 0 1 18.400 20H4.400A2 2 0 0 1 2.400 18V9.200H0.700A0.700 0.700 0 0 1 0 8.500V7.100A0.700 0.700 0 0 1 0.700 6.400z"/>
<rect x="0" y="20.800" width="22.800" height="1.500" rx="0.700"/>
</g>
<g id="steam" fill="none" stroke-width="0.800" stroke-linecap="round">
<path d="M9.10 9.9C9.30 11.6 6.90 12.1 7.50 13.4C7.90 14.4 7.40 15.2 6.90 16.2"/>
<path d="M12.60 9.9C12.80 11.6 10.40 12.1 11.00 13.4C11.40 14.4 10.90 15.2 10.40 16.2"/>
<path d="M16.10 9.9C16.30 11.6 13.90 12.1 14.50 13.4C14.90 14.4 14.40 15.2 13.90 16.2"/>
</g>
<g id="dl">
<path d="M4.400 0H7V5.400H9.900L5.700 9.600L1.500 5.400H4.400z"/>
<rect x="0" y="9.900" width="11.700" height="1.800"/>
</g>
<g id="dl2">
<rect x="0" y="0" width="11.400" height="1.300"/>
<path d="M4.100 1.300H6.600V7H9.400L5.400 11.500L1.200 7H4.100z"/>
</g>
<g id="bulb">
<circle cx="5.500" cy="5.300" r="4.800" fill="none" stroke="#fff" stroke-width="1"/>
<path d="M5.500 0A5.300 5.300 0 0 1 5.500 10.600z" fill="#fff"/>
<rect x="3" y="8.500" width="5.200" height="3.600" fill="#fff"/>
</g>
<g id="grip" stroke="#000" stroke-width="2.400" fill="none">
<path d="M1.300 7.900L10 0.400M4 10.700L12.800 3M6.800 13.900L15.800 5.500"/>
</g>
</defs>
</svg>
</body>
</html>
